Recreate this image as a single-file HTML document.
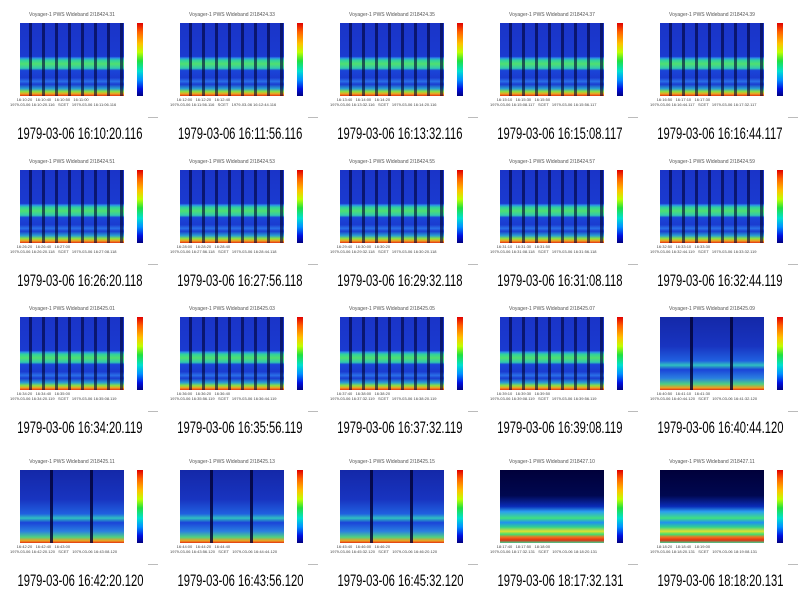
<!DOCTYPE html>
<html><head><meta charset="utf-8"><style>
body{margin:0;background:#fff;width:800px;height:596px;position:relative;overflow:hidden;font-family:"Liberation Sans",sans-serif}
.c{position:absolute;width:160px;height:149px}
.t{position:absolute;left:20px;width:104px;top:12px;font-size:5px;color:#555;text-align:center;white-space:nowrap}
.p{position:absolute;left:20px;top:23px;width:104px;height:73px;background-color:#1a2fb8}
.s{background-image:repeating-linear-gradient(90deg,rgba(0,0,40,0) 0 9px,rgba(0,0,50,.6) 9px 12px,rgba(0,0,40,0) 12px 13px),linear-gradient(180deg,#1a34c8 0,#1a3ad0 46%,#2a8ae8 48%,#30d0a0 51%,#4fe070 56%,#30c8b0 62%,#1a44d8 65%,#1a3cd0 75%,#2a70e8 80%,#1a3cd0 84%,#2aa0d0 90%,#8de040 94%,#f0a020 97%,#e03010 100%)}
.q{background-image:repeating-linear-gradient(90deg,rgba(0,0,40,0) 0 30px,rgba(0,0,50,.8) 30px 33px,rgba(0,0,40,0) 33px 40px),linear-gradient(180deg,#1428a8 0,#1834c0 40%,#2060e0 60%,#30c0c0 66%,#1a44d8 72%,#2a80e0 84%,#50d080 92%,#f0a020 97%,#e03010 100%)}
.r{background-image:linear-gradient(180deg,#00003a 0,#000850 35%,#0a2cb8 50%,#2aa0f0 57%,#40e080 66%,#2090f0 72%,#30d090 78%,#e0e030 84%,#40e070 88%,#f07020 92%,#e03010 96%,#40d090 100%)}
.cb{position:absolute;left:137px;top:23px;width:6px;height:73px;background:linear-gradient(180deg,#e00000,#ff6000 12%,#ffc000 28%,#c0ff00 40%,#20e040 52%,#00e0d0 66%,#0090ff 78%,#0010e0 90%,#000080)}
.x{position:absolute;left:10px;top:97px;width:125px;font-size:4px;color:#444;white-space:pre;line-height:5px}
.sm{position:absolute;left:148px;top:117px;width:10px;height:1px;background:#bbb}
.cap{position:absolute;left:-40px;width:240px;top:124px;text-align:center;font-family:"Liberation Sans",sans-serif;font-size:17px;color:#000;white-space:nowrap}
.cap span{display:inline-block;transform:scaleX(.66)}
</style></head><body>
<div class="c" style="left:0;top:0"><div class="t">Voyager-1 PWS Wideband 2/18424.31</div><div class="p s"></div><div class="cb"></div><div class="x">      16:10:20   16:10:40   16:10:50   16:11:00
1979-03-06 16:10:20.116   SCET   1979-03-06 16:11:06.116</div><div class="sm"></div><div class="cap"><span>1979-03-06 16:10:20.116</span></div></div>
<div class="c" style="left:160px;top:0"><div class="t">Voyager-1 PWS Wideband 2/18424.33</div><div class="p s"></div><div class="cb"></div><div class="x">      16:12:00   16:12:20   16:12:40
1979-03-06 16:11:56.116   SCET   1979-03-06 16:12:44.116</div><div class="sm"></div><div class="cap"><span>1979-03-06 16:11:56.116</span></div></div>
<div class="c" style="left:320px;top:0"><div class="t">Voyager-1 PWS Wideband 2/18424.35</div><div class="p s"></div><div class="cb"></div><div class="x">      16:13:40   16:14:00   16:14:20
1979-03-06 16:13:32.116   SCET   1979-03-06 16:14:20.116</div><div class="sm"></div><div class="cap"><span>1979-03-06 16:13:32.116</span></div></div>
<div class="c" style="left:480px;top:0"><div class="t">Voyager-1 PWS Wideband 2/18424.37</div><div class="p s"></div><div class="cb"></div><div class="x">      16:15:10   16:15:30   16:15:50
1979-03-06 16:15:08.117   SCET   1979-03-06 16:15:56.117</div><div class="sm"></div><div class="cap"><span>1979-03-06 16:15:08.117</span></div></div>
<div class="c" style="left:640px;top:0"><div class="t">Voyager-1 PWS Wideband 2/18424.39</div><div class="p s"></div><div class="cb"></div><div class="x">      16:16:50   16:17:10   16:17:30
1979-03-06 16:16:44.117   SCET   1979-03-06 16:17:32.117</div><div class="sm"></div><div class="cap"><span>1979-03-06 16:16:44.117</span></div></div>

<div class="c" style="left:0;top:147px"><div class="t">Voyager-1 PWS Wideband 2/18424.51</div><div class="p s"></div><div class="cb"></div><div class="x">      16:26:20   16:26:40   16:27:00
1979-03-06 16:26:20.118   SCET   1979-03-06 16:27:08.118</div><div class="sm"></div><div class="cap"><span>1979-03-06 16:26:20.118</span></div></div>
<div class="c" style="left:160px;top:147px"><div class="t">Voyager-1 PWS Wideband 2/18424.53</div><div class="p s"></div><div class="cb"></div><div class="x">      16:28:00   16:28:20   16:28:40
1979-03-06 16:27:56.118   SCET   1979-03-06 16:28:44.118</div><div class="sm"></div><div class="cap"><span>1979-03-06 16:27:56.118</span></div></div>
<div class="c" style="left:320px;top:147px"><div class="t">Voyager-1 PWS Wideband 2/18424.55</div><div class="p s"></div><div class="cb"></div><div class="x">      16:29:40   16:30:00   16:30:20
1979-03-06 16:29:32.118   SCET   1979-03-06 16:30:20.118</div><div class="sm"></div><div class="cap"><span>1979-03-06 16:29:32.118</span></div></div>
<div class="c" style="left:480px;top:147px"><div class="t">Voyager-1 PWS Wideband 2/18424.57</div><div class="p s"></div><div class="cb"></div><div class="x">      16:31:10   16:31:30   16:31:50
1979-03-06 16:31:08.118   SCET   1979-03-06 16:31:56.118</div><div class="sm"></div><div class="cap"><span>1979-03-06 16:31:08.118</span></div></div>
<div class="c" style="left:640px;top:147px"><div class="t">Voyager-1 PWS Wideband 2/18424.59</div><div class="p s"></div><div class="cb"></div><div class="x">      16:32:50   16:33:10   16:33:30
1979-03-06 16:32:44.119   SCET   1979-03-06 16:33:32.119</div><div class="sm"></div><div class="cap"><span>1979-03-06 16:32:44.119</span></div></div>

<div class="c" style="left:0;top:294px"><div class="t">Voyager-1 PWS Wideband 2/18425.01</div><div class="p s"></div><div class="cb"></div><div class="x">      16:34:20   16:34:40   16:35:00
1979-03-06 16:34:20.119   SCET   1979-03-06 16:35:08.119</div><div class="sm"></div><div class="cap"><span>1979-03-06 16:34:20.119</span></div></div>
<div class="c" style="left:160px;top:294px"><div class="t">Voyager-1 PWS Wideband 2/18425.03</div><div class="p s"></div><div class="cb"></div><div class="x">      16:36:00   16:36:20   16:36:40
1979-03-06 16:35:56.119   SCET   1979-03-06 16:36:44.119</div><div class="sm"></div><div class="cap"><span>1979-03-06 16:35:56.119</span></div></div>
<div class="c" style="left:320px;top:294px"><div class="t">Voyager-1 PWS Wideband 2/18425.05</div><div class="p s"></div><div class="cb"></div><div class="x">      16:37:40   16:38:00   16:38:20
1979-03-06 16:37:32.119   SCET   1979-03-06 16:38:20.119</div><div class="sm"></div><div class="cap"><span>1979-03-06 16:37:32.119</span></div></div>
<div class="c" style="left:480px;top:294px"><div class="t">Voyager-1 PWS Wideband 2/18425.07</div><div class="p s"></div><div class="cb"></div><div class="x">      16:39:10   16:39:30   16:39:50
1979-03-06 16:39:08.119   SCET   1979-03-06 16:39:56.119</div><div class="sm"></div><div class="cap"><span>1979-03-06 16:39:08.119</span></div></div>
<div class="c" style="left:640px;top:294px"><div class="t">Voyager-1 PWS Wideband 2/18425.09</div><div class="p q"></div><div class="cb"></div><div class="x">      16:40:50   16:41:10   16:41:30
1979-03-06 16:40:44.120   SCET   1979-03-06 16:41:32.120</div><div class="sm"></div><div class="cap"><span>1979-03-06 16:40:44.120</span></div></div>

<div class="c" style="left:0;top:447px"><div class="t">Voyager-1 PWS Wideband 2/18425.11</div><div class="p q"></div><div class="cb"></div><div class="x">      16:42:20   16:42:40   16:43:00
1979-03-06 16:42:20.120   SCET   1979-03-06 16:43:08.120</div><div class="sm"></div><div class="cap"><span>1979-03-06 16:42:20.120</span></div></div>
<div class="c" style="left:160px;top:447px"><div class="t">Voyager-1 PWS Wideband 2/18425.13</div><div class="p q"></div><div class="cb"></div><div class="x">      16:44:00   16:44:20   16:44:40
1979-03-06 16:43:56.120   SCET   1979-03-06 16:44:44.120</div><div class="sm"></div><div class="cap"><span>1979-03-06 16:43:56.120</span></div></div>
<div class="c" style="left:320px;top:447px"><div class="t">Voyager-1 PWS Wideband 2/18425.15</div><div class="p q"></div><div class="cb"></div><div class="x">      16:45:40   16:46:00   16:46:20
1979-03-06 16:45:32.120   SCET   1979-03-06 16:46:20.120</div><div class="sm"></div><div class="cap"><span>1979-03-06 16:45:32.120</span></div></div>
<div class="c" style="left:480px;top:447px"><div class="t">Voyager-1 PWS Wideband 2/18427.10</div><div class="p r"></div><div class="cb"></div><div class="x">      18:17:40   18:17:50   18:18:00
1979-03-06 18:17:32.131   SCET   1979-03-06 18:18:20.131</div><div class="sm"></div><div class="cap"><span>1979-03-06 18:17:32.131</span></div></div>
<div class="c" style="left:640px;top:447px"><div class="t">Voyager-1 PWS Wideband 2/18427.11</div><div class="p r"></div><div class="cb"></div><div class="x">      18:18:20   18:18:40   18:19:00
1979-03-06 18:18:20.131   SCET   1979-03-06 18:19:08.131</div><div class="sm"></div><div class="cap"><span>1979-03-06 18:18:20.131</span></div></div>
</body></html>
